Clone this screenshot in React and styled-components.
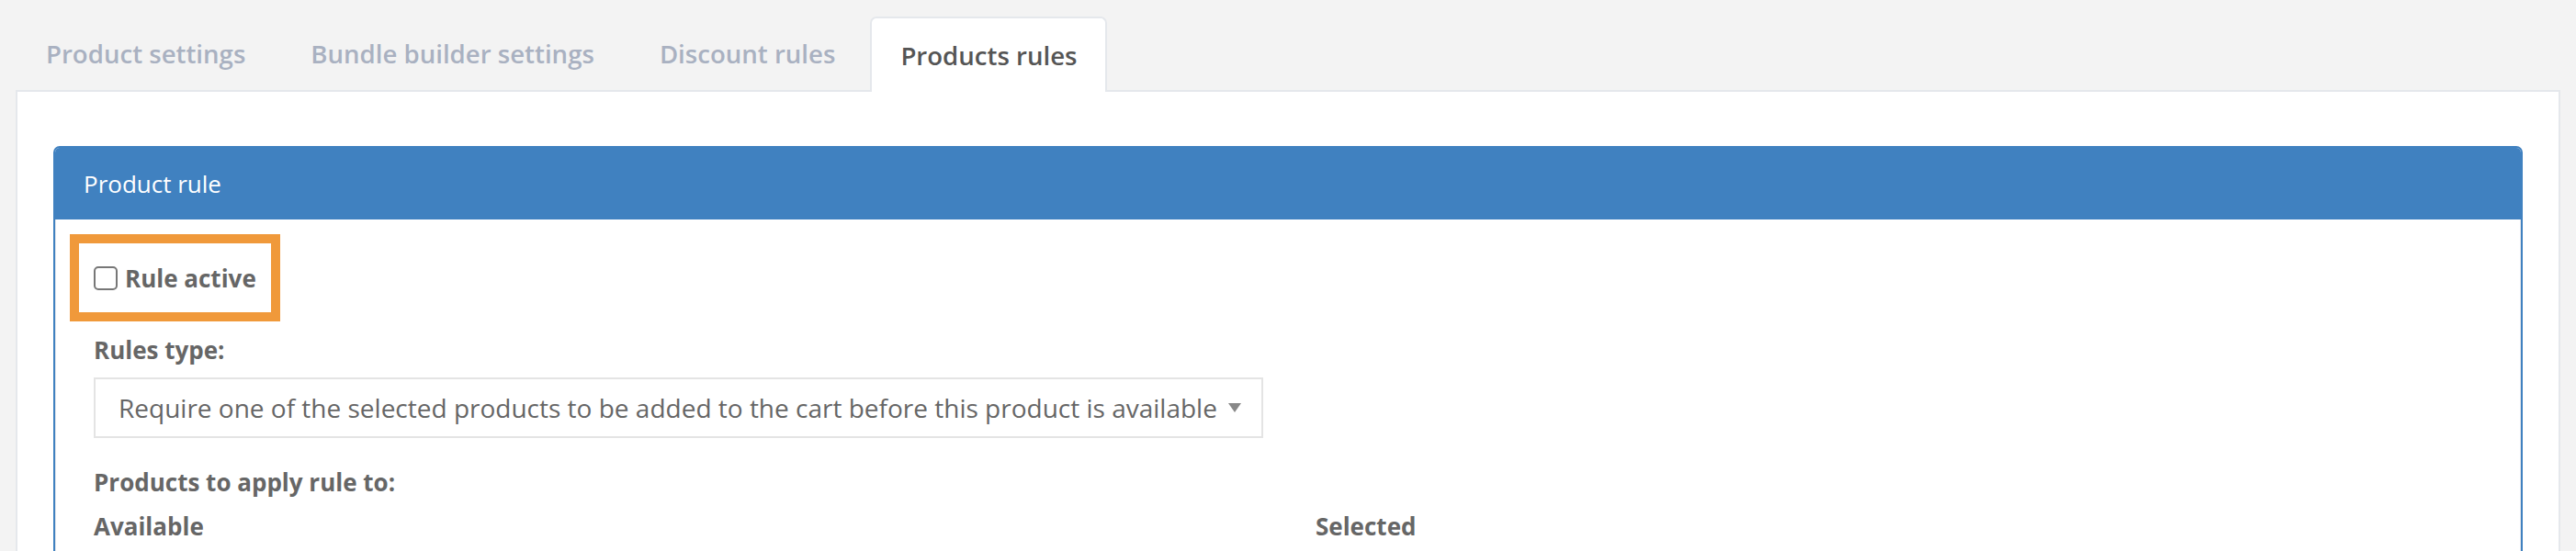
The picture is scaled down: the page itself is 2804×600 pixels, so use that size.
import React from "react";
import styled, { createGlobalStyle } from "styled-components";

const GlobalStyle = createGlobalStyle`
  html, body {
    margin: 0;
    padding: 0;
    background: #f3f3f3;
  }
  body {
    font-family: "Open Sans", "Noto Sans", sans-serif;
    color: #666666;
  }
  * {
    box-sizing: border-box;
  }
`;

const Page = styled.div`
  padding: 16px 17px 0;
  height: 600px;
  overflow: hidden;
`;

const TabBar = styled.ul`
  display: flex;
  align-items: flex-end;
  gap: 5px;
  margin: 0;
  padding: 0;
  list-style: none;
  height: 82px;
`;

const Tab = styled.li`
  display: flex;
  align-items: center;
  height: 82px;
  padding: 0 31px;
  margin-bottom: ${(p) => (p.$active ? "-2px" : "0")};
  position: relative;
  font-size: 27.6px;
  font-weight: 600;
  line-height: 38px;
  color: ${(p) => (p.$active ? "#555555" : "#a9b1c1")};
  background: ${(p) => (p.$active ? "#ffffff" : "transparent")};
  border: 2px solid ${(p) => (p.$active ? "#e5e8ec" : "transparent")};
  border-bottom: none;
  border-radius: 7px 7px 0 0;
  z-index: 1;
`;

const ContentBox = styled.div`
  background: #ffffff;
  border: 2px solid #e5e8ec;
  padding: 59px 39px 0;
  min-height: 600px;
`;

const Panel = styled.section`
  border: 2px solid #4081c0;
  border-radius: 7px 7px 0 0;
  overflow: hidden;
`;

const PanelHeading = styled.h3`
  margin: 0;
  height: 78px;
  display: flex;
  align-items: center;
  padding: 0 31px;
  background: #4081c0;
  color: #ffffff;
  font-size: 26px;
  font-weight: 400;
  line-height: 36px;
`;

const PanelBody = styled.div`
  border: 1px solid #e4e6ea;
  border-top: none;
  padding: 16px 41px 300px;
`;

const Highlight = styled.div`
  display: inline-flex;
  margin-left: -26px;
  border: 10px solid #f0993a;
`;

const CheckLabel = styled.label`
  display: inline-flex;
  align-items: center;
  gap: 8px;
  height: 75px;
  padding: 0 16px;
  font-size: 26px;
  font-weight: 700;
  line-height: 36px;
  color: #666666;
`;

const CheckBox = styled.input`
  appearance: none;
  margin: 0;
  width: 26px;
  height: 26px;
  border: 2px solid #777777;
  border-radius: 5px;
  background: #ffffff;
`;

const Label = styled.div`
  margin-top: ${(p) => p.$top || 0}px;
  font-size: 26px;
  font-weight: 700;
  line-height: 36px;
  color: #666666;
`;

const Select = styled.div`
  display: inline-flex;
  align-items: center;
  gap: 12px;
  margin-top: 12px;
  height: 66px;
  padding: 0 22px 0 25px;
  border: 2px solid #e4e4e4;
  font-size: 28px;
  line-height: 38px;
  color: #666666;
  white-space: nowrap;
`;

const Caret = styled.span`
  width: 0;
  height: 0;
  border-left: 7px solid transparent;
  border-right: 7px solid transparent;
  border-top: 10px solid #888888;
`;

const Columns = styled.div`
  display: grid;
  grid-template-columns: 1fr 1fr;
  column-gap: 60px;
  margin-top: 12px;
`;

const ColumnTitle = styled.div`
  font-size: 26px;
  font-weight: 700;
  line-height: 36px;
  color: #666666;
`;

const tabs = [
  "Product settings",
  "Bundle builder settings",
  "Discount rules",
  "Products rules",
];

export default function App() {
  return (
    <>
      <GlobalStyle />
      <Page>
        <TabBar>
          {tabs.map((t, i) => (
            <Tab key={t} $active={i === 3}>
              {t}
            </Tab>
          ))}
        </TabBar>
        <ContentBox>
          <Panel>
            <PanelHeading>Product rule</PanelHeading>
            <PanelBody>
              <Highlight>
                <CheckLabel>
                  <CheckBox type="checkbox" />
                  Rule active
                </CheckLabel>
              </Highlight>
              <Label $top={13}>Rules type:</Label>
              <Select>
                Require one of the selected products to be added to the cart
                before this product is available
                <Caret />
              </Select>
              <Label $top={30}>Products to apply rule to:</Label>
              <Columns>
                <ColumnTitle>Available</ColumnTitle>
                <ColumnTitle>Selected</ColumnTitle>
              </Columns>
            </PanelBody>
          </Panel>
        </ContentBox>
      </Page>
    </>
  );
}
